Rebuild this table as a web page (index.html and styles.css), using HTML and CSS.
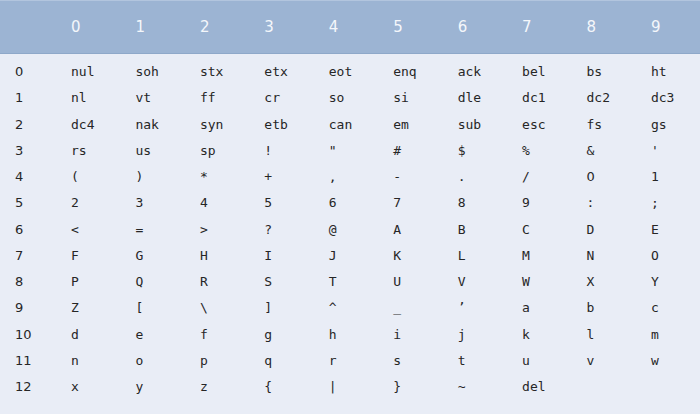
FILE: index.html
```html
<!DOCTYPE html>
<html>
<head>
<meta charset="utf-8">
<link rel="stylesheet" href="styles.css">
</head>
<body>
<div class="page">
  <div class="head row">
    <span></span><span>0</span><span>1</span><span>2</span><span>3</span><span>4</span><span>5</span><span>6</span><span>7</span><span>8</span><span>9</span>
  </div>
  <div class="body">
    <div class="row"><span class="lbl">0</span><span>nul</span><span>soh</span><span>stx</span><span>etx</span><span>eot</span><span>enq</span><span>ack</span><span>bel</span><span>bs</span><span>ht</span></div>
    <div class="row"><span class="lbl">1</span><span>nl</span><span>vt</span><span>ff</span><span>cr</span><span>so</span><span>si</span><span>dle</span><span>dc1</span><span>dc2</span><span>dc3</span></div>
    <div class="row"><span class="lbl">2</span><span>dc4</span><span>nak</span><span>syn</span><span>etb</span><span>can</span><span>em</span><span>sub</span><span>esc</span><span>fs</span><span>gs</span></div>
    <div class="row"><span class="lbl">3</span><span>rs</span><span>us</span><span>sp</span><span>!</span><span>"</span><span>#</span><span>$</span><span>%</span><span>&amp;</span><span>'</span></div>
    <div class="row"><span class="lbl">4</span><span>(</span><span>)</span><span>*</span><span>+</span><span>,</span><span>-</span><span>.</span><span>/</span><span class="plain">0</span><span>1</span></div>
    <div class="row"><span class="lbl">5</span><span>2</span><span>3</span><span>4</span><span>5</span><span>6</span><span>7</span><span>8</span><span>9</span><span>:</span><span>;</span></div>
    <div class="row"><span class="lbl">6</span><span>&lt;</span><span>=</span><span>&gt;</span><span>?</span><span>@</span><span>A</span><span>B</span><span>C</span><span>D</span><span>E</span></div>
    <div class="row"><span class="lbl">7</span><span>F</span><span>G</span><span>H</span><span>I</span><span>J</span><span>K</span><span>L</span><span>M</span><span>N</span><span>O</span></div>
    <div class="row"><span class="lbl">8</span><span>P</span><span>Q</span><span>R</span><span>S</span><span>T</span><span>U</span><span>V</span><span>W</span><span>X</span><span>Y</span></div>
    <div class="row"><span class="lbl">9</span><span>Z</span><span>[</span><span>\</span><span>]</span><span>^</span><span>_</span><span>’</span><span>a</span><span>b</span><span>c</span></div>
    <div class="row"><span class="lbl">10</span><span>d</span><span>e</span><span>f</span><span>g</span><span>h</span><span>i</span><span>j</span><span>k</span><span>l</span><span>m</span></div>
    <div class="row"><span class="lbl">11</span><span>n</span><span>o</span><span>p</span><span>q</span><span>r</span><span>s</span><span>t</span><span>u</span><span>v</span><span>w</span></div>
    <div class="row"><span class="lbl">12</span><span>x</span><span>y</span><span>z</span><span>{</span><span>|</span><span>}</span><span>~</span><span>del</span><span></span><span></span></div>
  </div>
</div>
</body>
</html>
```
FILE: styles.css
```css
html, body {
  margin: 0;
  padding: 0;
}
body {
  width: 700px;
  height: 414px;
  background: #e9edf6;
  overflow: hidden;
}
.page {
  width: 700px;
}
.row {
  display: grid;
  grid-template-columns: 56px repeat(9, 64.44px) 1fr;
  padding-left: 15px;
}
.head {
  background: #9cb4d3;
  border-top: 1px solid #b2c5de;
  border-bottom: 1px solid #8ea8c9;
  box-sizing: border-box;
  height: 54px;
  align-items: center;
  font-family: "DejaVu Sans", sans-serif;
  font-size: 15px;
  color: #f4f7fb;
}
.body {
  padding-top: 5px;
  font-family: "DejaVu Sans Mono", monospace;
  font-size: 13px;
  color: #262626;
}
.body .row {
  height: 26.25px;
  line-height: 26.25px;
}
.lbl,
.plain {
  font-family: "DejaVu Sans", sans-serif;
}
```
